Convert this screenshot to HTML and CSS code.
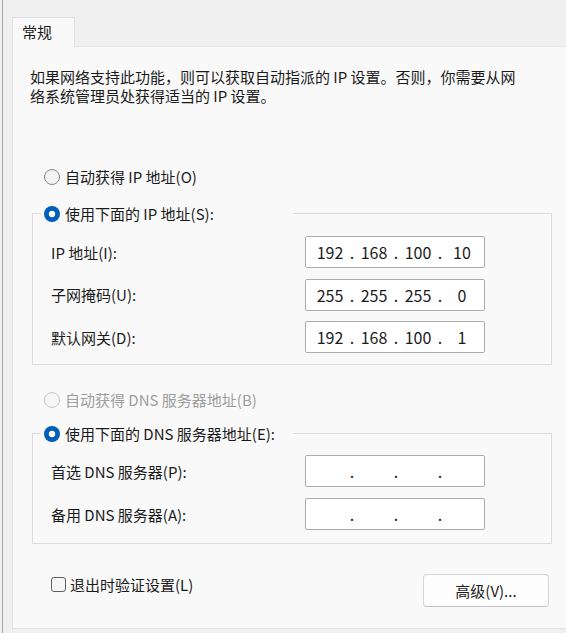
FILE: index.html
```html
<!DOCTYPE html>
<html lang="zh-CN">
<head>
  <meta charset="UTF-8">
  <meta name="viewport" content="width=device-width, initial-scale=1.0">
  <title>Internet 协议版本 4 (TCP/IPv4) 属性</title>
  <link rel="stylesheet" href="styles.css">
</head>
<body>
  <div class="window">
    <div class="edge"></div>
    <div class="dialog">
      <div class="tabs">
        <div class="tab">常规</div>
      </div>
      <div class="panel">
        <p class="intro">如果网络支持此功能，则可以获取自动指派的 IP 设置。否则，你需要从网<br>络系统管理员处获得适当的 IP 设置。</p>

        <label class="radio option"><span class="dot"></span>自动获得 IP 地址(O)</label>

        <fieldset class="group group-ip">
          <legend><label class="radio"><span class="dot checked"></span>使用下面的 IP 地址(S):</label></legend>
          <div class="fields">
            <span>IP 地址(I):</span>
            <div class="ipbox">
              <span class="octet">192</span><span class="sep">.</span><span class="octet">168</span><span class="sep">.</span><span class="octet">100</span><span class="sep">.</span><span class="octet">10</span>
            </div>
            <span>子网掩码(U):</span>
            <div class="ipbox">
              <span class="octet">255</span><span class="sep">.</span><span class="octet">255</span><span class="sep">.</span><span class="octet">255</span><span class="sep">.</span><span class="octet">0</span>
            </div>
            <span>默认网关(D):</span>
            <div class="ipbox">
              <span class="octet">192</span><span class="sep">.</span><span class="octet">168</span><span class="sep">.</span><span class="octet">100</span><span class="sep">.</span><span class="octet">1</span>
            </div>
          </div>
        </fieldset>

        <label class="radio option option-dns disabled"><span class="dot"></span>自动获得 DNS 服务器地址(B)</label>

        <fieldset class="group group-dns">
          <legend><label class="radio"><span class="dot checked"></span>使用下面的 DNS 服务器地址(E):</label></legend>
          <div class="fields">
            <span>首选 DNS 服务器(P):</span>
            <div class="ipbox">
              <span class="octet"></span><span class="sep">.</span><span class="octet"></span><span class="sep">.</span><span class="octet"></span><span class="sep">.</span><span class="octet"></span>
            </div>
            <span>备用 DNS 服务器(A):</span>
            <div class="ipbox">
              <span class="octet"></span><span class="sep">.</span><span class="octet"></span><span class="sep">.</span><span class="octet"></span><span class="sep">.</span><span class="octet"></span>
            </div>
          </div>
        </fieldset>

        <div class="footer">
          <label class="check"><span class="box"></span>退出时验证设置(L)</label>
          <button class="advanced">高级(V)...</button>
        </div>
      </div>
    </div>
  </div>
</body>
</html>
```

FILE: styles.css
```css
* {
  box-sizing: border-box;
}

body {
  margin: 0;
  background-color: #f0f0f0;
  font-family: "Noto Sans CJK SC", "Microsoft YaHei", sans-serif;
  font-size: 15px;
  color: #1b1b1b;
}

.window {
  display: flex;
  height: 633px;
  overflow: hidden;
}

/* sliver of the window behind */
.edge {
  width: 12px;
  flex: none;
}

.edge::before {
  content: "";
  display: block;
  width: 1px;
  height: 100%;
  margin-left: 2px;
  background-color: #ababab;
}

.dialog {
  flex: 1;
  display: flex;
  flex-direction: column;
}

.tabs {
  height: 47px;
  display: flex;
  align-items: flex-end;
  border-bottom: 1px solid #e5e5e5;
}

.tab {
  width: 63px;
  height: 30px;
  margin-bottom: -1px;
  padding-left: 9px;
  line-height: 28px;
  background-color: #f9f9f9;
  border: 1px solid #e0e0e0;
  border-bottom: none;
}

.panel {
  height: 582px;
  background-color: #f9f9f9;
  border-left: 1px solid #e2e2e2;
  border-bottom: 1px solid #e2e2e2;
}

.intro {
  margin: 20px 0 0 17px;
  line-height: 19px;
}

.radio {
  display: flex;
  align-items: center;
  gap: 5px;
  height: 21px;
  line-height: 21px;
  white-space: nowrap;
}

.option {
  margin: 61px 0 0 31px;
}

.option-dns {
  margin-top: 24px;
}

.dot {
  width: 16px;
  height: 16px;
  flex: none;
  border: 1px solid #878787;
  border-radius: 50%;
  background-color: #f3f3f3;
}

.dot.checked {
  border: none;
  background: radial-gradient(circle, #fff 0, #fff 3px, #005fb8 3.6px);
}

.disabled {
  color: #9d9d9d;
}

.disabled .dot {
  border-color: #c6c6c6;
  background-color: #f7f7f7;
}

.group {
  width: 520px;
  margin: 16px 0 0 19px;
  padding: 12px 0 11px 18px;
  border: 1px solid #dcdcdc;
}

.group-dns {
  margin-top: 13px;
  padding-top: 11px;
  padding-bottom: 13px;
}

.group legend {
  width: 252px;
  margin-left: -10px;
  padding: 0 0 0 3px;
}

.fields {
  display: grid;
  grid-template-columns: 254px 180px;
  row-gap: 10.5px;
  align-items: center;
}

.group-dns .fields {
  row-gap: 11px;
}

.ipbox {
  display: flex;
  align-items: center;
  height: 32px;
  padding-left: 6px;
  background-color: #fff;
  border: 1px solid #ababab;
  border-radius: 2px;
  font-size: 16px;
  line-height: 30px;
}

.octet {
  width: 36px;
  text-align: center;
}

.sep {
  width: 8px;
  text-align: center;
}

.footer {
  display: flex;
  justify-content: space-between;
  align-items: flex-start;
  margin-top: 30px;
  padding: 0 17px 0 38px;
}

.check {
  display: flex;
  align-items: center;
  gap: 4px;
  height: 21px;
}

.box {
  width: 15px;
  height: 15px;
  border: 1px solid #5f5f5f;
  border-radius: 3px;
  background-color: #f6f6f6;
}

.advanced {
  width: 126px;
  height: 33px;
  font-family: inherit;
  font-size: 15px;
  color: #1b1b1b;
  background-color: #fdfdfd;
  border: 1px solid #d6d6d6;
  border-bottom-color: #c2c2c2;
  border-radius: 4px;
}
```
